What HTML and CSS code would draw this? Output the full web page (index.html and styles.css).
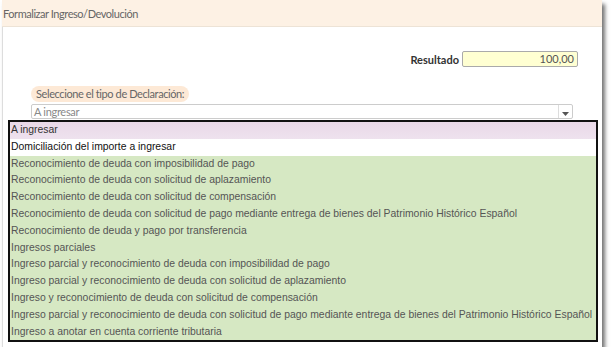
FILE: index.html
```html
<!DOCTYPE html>
<html lang="es">
<head>
<meta charset="utf-8">
<title>Formalizar Ingreso/Devolución</title>
<link rel="stylesheet" href="styles.css">
</head>
<body>
<div class="page">
  <div class="header">Formalizar Ingreso/Devolución</div>
  <div class="panel">
    <div class="result-row">
      <span class="result-label">Resultado</span>
      <div class="result-input">100,00</div>
    </div>
    <div class="decl">
      <div class="decl-label">Seleccione el tipo de Declaración:</div>
      <div class="select">
        <span class="select-text">A ingresar</span>
        <span class="select-arrow"><svg width="7" height="4" viewBox="0 0 7 4"><path d="M0 0H7L3.5 4Z" fill="#555"/></svg></span>
      </div>
    </div>
    <ul class="dropdown">
      <li class="opt opt-selected">A ingresar</li>
      <li class="opt opt-plain">Domiciliación del importe a ingresar</li>
      <li class="opt">Reconocimiento de deuda con imposibilidad de pago</li>
      <li class="opt">Reconocimiento de deuda con solicitud de aplazamiento</li>
      <li class="opt">Reconocimiento de deuda con solicitud de compensación</li>
      <li class="opt">Reconocimiento de deuda con solicitud de pago mediante entrega de bienes del Patrimonio Histórico Español</li>
      <li class="opt">Reconocimiento de deuda y pago por transferencia</li>
      <li class="opt">Ingresos parciales</li>
      <li class="opt">Ingreso parcial y reconocimiento de deuda con imposibilidad de pago</li>
      <li class="opt">Ingreso parcial y reconocimiento de deuda con solicitud de aplazamiento</li>
      <li class="opt">Ingreso y reconocimiento de deuda con solicitud de compensación</li>
      <li class="opt">Ingreso parcial y reconocimiento de deuda con solicitud de pago mediante entrega de bienes del Patrimonio Histórico Español</li>
      <li class="opt">Ingreso a anotar en cuenta corriente tributaria</li>
    </ul>
  </div>
</div>
</body>
</html>
```
FILE: styles.css
```css
html, body {
  margin: 0;
  padding: 0;
  background: #fff;
}
body {
  padding: 0 0 0 2px;
}
.page {
  position: relative;
  width: 600px;
  height: 347px;
  background: #fff;
  box-shadow: 3px 4px 4px rgba(0, 0, 0, 0.55);
  font-family: Lato, "Liberation Sans", sans-serif;
}
.header {
  height: 27px;
  line-height: 27px;
  background: #fdf1e4;
  color: #666;
  font-size: 11px;
  letter-spacing: -0.45px;
  padding-left: 1px;
  border-bottom: 1px solid #ede3d6;
  box-sizing: border-box;
}
.panel {
  height: 320px;
  border-left: 1px solid #ddd;
  box-sizing: border-box;
}
.result-row {
  display: flex;
  justify-content: flex-end;
  align-items: center;
  gap: 3px;
  padding: 24px 24px 0 0;
}
.result-label {
  font-weight: bold;
  font-size: 11px;
  color: #333;
}
.result-input {
  width: 111px;
  height: 14px;
  line-height: 14px;
  border: 1px solid #aaa;
  border-radius: 2px;
  background: #ffffd2;
  text-align: right;
  padding-right: 3px;
  font-size: 11px;
  color: #555;
}
.decl {
  padding: 15px 29px 0 28px;
}
.decl-label {
  display: inline-block;
  background: #fde9d6;
  border-radius: 8px;
  padding: 0 5px;
  height: 16px;
  line-height: 16px;
  font-size: 11px;
  letter-spacing: -0.4px;
  color: #666;
}
.select {
  display: flex;
  height: 13px;
  margin-top: 2px;
  border: 1px solid #ccc;
  border-radius: 2px;
  background: #fff;
}
.select-text {
  flex: 1;
  padding-left: 2px;
  font-size: 11px;
  line-height: 13px;
  letter-spacing: -0.3px;
  color: #888;
}
.select-arrow {
  width: 14px;
  border-left: 1px solid #ddd;
  display: flex;
  align-items: center;
  justify-content: center;
  padding-top: 5px;
  box-sizing: border-box;
}
.dropdown {
  position: absolute;
  left: 6px;
  top: 120px;
  width: 586px;
  margin: 0;
  padding: 0;
  list-style: none;
  border: 2px solid #111;
  background: #d6e8c3;
  font-family: "Liberation Sans", Arial, sans-serif;
  font-size: 10.4px;
}
.opt {
  height: 16.8px;
  line-height: 16.8px;
  padding-left: 1px;
  color: #555;
  white-space: nowrap;
}
.opt-selected {
  background: linear-gradient(#e9d8e8, #eee2ee);
  color: #333;
}
.opt-plain {
  background: #fff;
  color: #111;
}
```
